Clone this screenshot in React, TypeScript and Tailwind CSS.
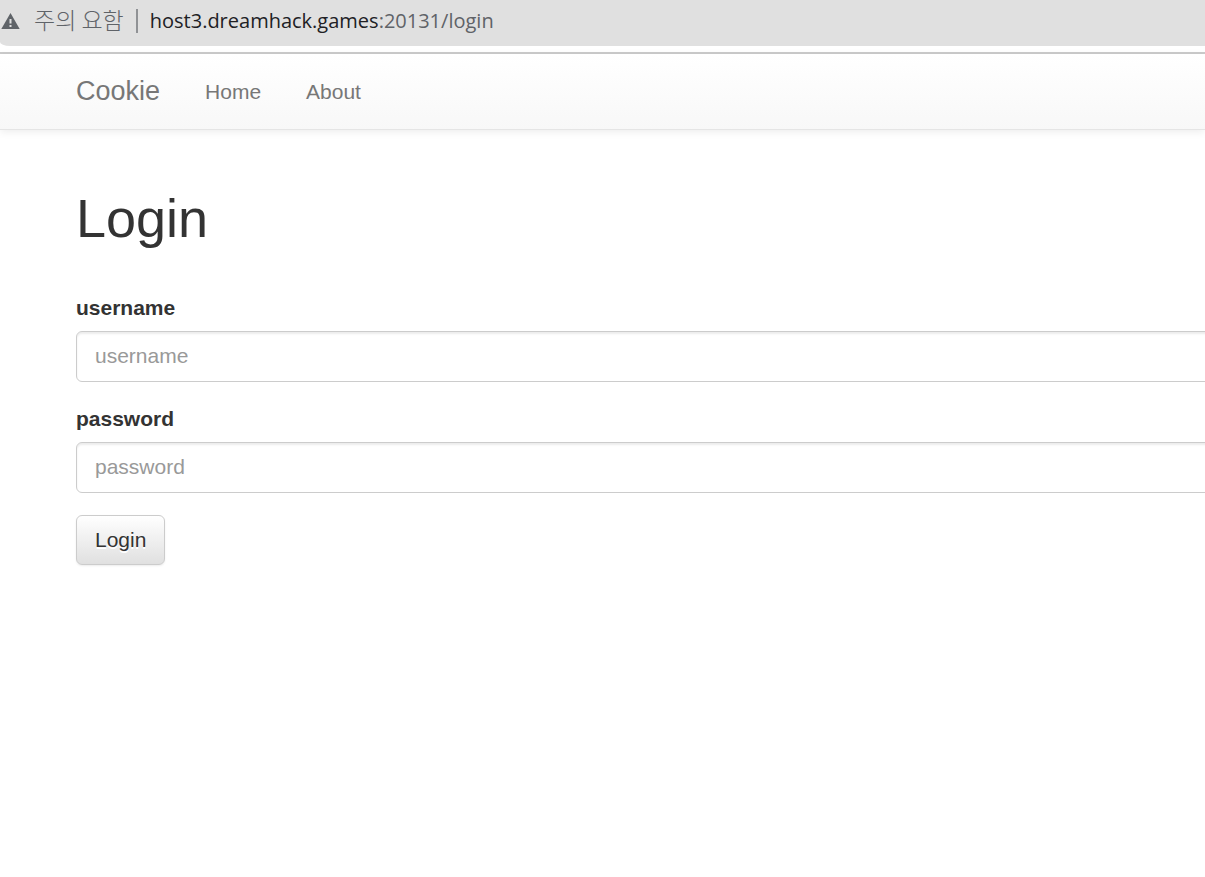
import React from 'react';

const fields = [
  { name: 'username', type: 'text' },
  { name: 'password', type: 'password' },
];

const WarningIcon: React.FC<React.SVGProps<SVGSVGElement>> = (props) => (
  <svg {...props} viewBox="0 0 20 18" fill="currentColor" aria-hidden="true">
    <path fillRule="evenodd" d="M10.5 1 19.7 17H1.3L10.5 1ZM9.5 7v4.5h2V7h-2Zm0 6v2h2v-2h-2Z" />
  </svg>
);

// Browser address bar
const AddressBar: React.FC = () => (
  <div className="border-b-2 border-[#cbcbcb] bg-white pb-1.5">
    <div className="flex h-[46px] items-center rounded-bl-[10px_4px] bg-[#e0e0e0] pb-1 text-xl leading-7">
      <WarningIcon className="h-[18px] w-5 flex-none text-[#5f6368]" />
      <span className="ml-[14px] pb-1 font-['Noto_Sans_CJK_KR',sans-serif] text-[23px] font-light text-[#5f6368]">
        주의 요함
      </span>
      <span className="ml-3 h-6 w-0.5 flex-none bg-[#909295]" />
      <span className="ml-3 font-['Open_Sans',sans-serif] text-[#5f6368]">
        <span className="text-[#202124]">host3.dreamhack.games</span>:20131/login
      </span>
    </div>
  </div>
);

const Navbar: React.FC = () => (
  <nav className="flex h-[76px] items-center border-b border-[#e5e5e5] bg-linear-to-b from-white to-[#f8f8f8] pl-[76px] text-[21px] text-[#777] shadow-[0_2px_8px_rgba(0,0,0,0.075)] [text-shadow:0_1px_0_rgba(255,255,255,0.25)]">
    <a href="#" className="text-[27px]">Cookie</a>
    <a href="#home" className="ml-[45px]">Home</a>
    <a href="#about" className="ml-[45px]">About</a>
  </nav>
);

export default function App() {
  return (
    <div className="min-h-screen overflow-x-hidden bg-white font-['Liberation_Sans',Arial,sans-serif] text-[#333]">
      <AddressBar />
      <Navbar />
      <main className="pt-[58px] pl-[76px]">
        <h1 className="text-[54px] leading-[60px]">Login</h1>
        <form className="-mr-2 mt-[45px]" onSubmit={(e) => e.preventDefault()}>
          {fields.map((field) => (
            <div key={field.name} className="mb-[22px]">
              <label htmlFor={field.name} className="mb-2 block text-[21px] leading-[30px] font-bold">
                {field.name}
              </label>
              <input
                id={field.name}
                name={field.name}
                type={field.type}
                placeholder={field.name}
                className="block h-[51px] w-full rounded-md border border-[#ccc] bg-white px-[18px] pb-0.5 text-[21px] text-[#555] shadow-[inset_0_2px_2px_rgba(0,0,0,0.075)] placeholder:text-[#999]"
              />
            </div>
          ))}
          <button
            type="submit"
            className="h-[50px] rounded-md border border-[#ccc] bg-linear-to-b from-white to-[#e0e0e0] px-[18px] text-[21px] shadow-[0_1px_2px_rgba(0,0,0,0.075)] [text-shadow:0_2px_0_#fff]"
          >
            Login
          </button>
        </form>
      </main>
    </div>
  );
}
